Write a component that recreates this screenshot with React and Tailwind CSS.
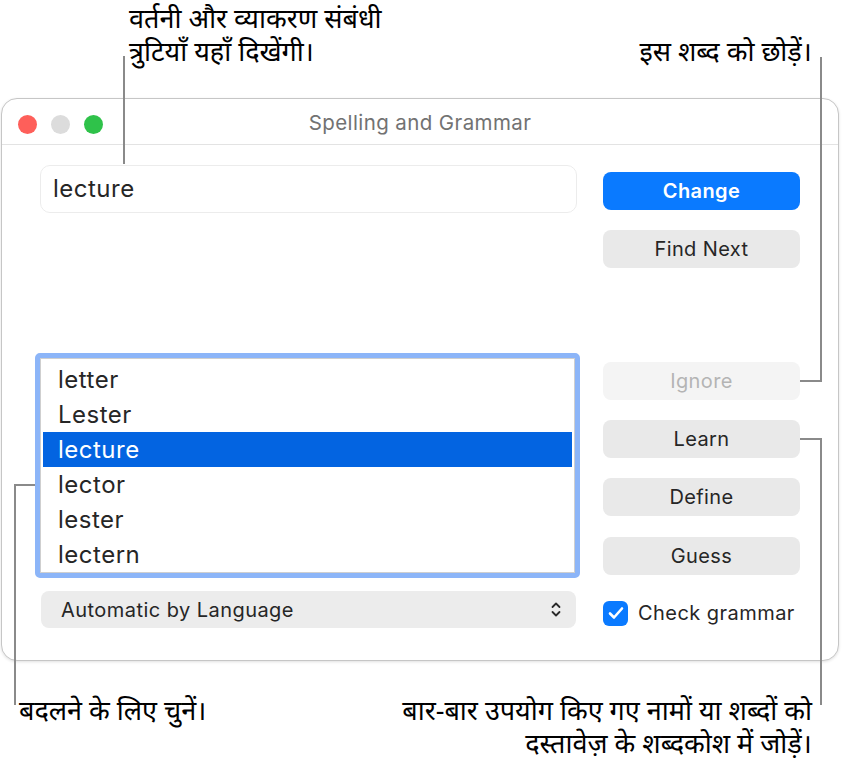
import React from 'react';

const ui = { fontFamily: 'Inter, "Liberation Sans", sans-serif' };
const hi = { fontFamily: '"Noto Sans", "Noto Sans Devanagari", "Lohit Devanagari", sans-serif' };

const suggestions = ['letter', 'Lester', 'lecture', 'lector', 'lester', 'lectern'];

const Button = ({ children, className = '' }) => (
    <div className={`h-[38px] rounded-[8px] flex items-center justify-center text-[20px] tracking-[0.4px] ${className}`}>
        {children}
    </div>
);

const Callouts = () => (
    <svg className="absolute inset-0 pointer-events-none" width="843" height="766">
        <g stroke="#8a8a8a" strokeWidth="2" fill="none">
            <path d="M124 56 V164" />
            <path d="M821 57 V381 H800" />
            <path d="M800 439 H821 V705" />
            <path d="M35 485 H15 V705" />
        </g>
    </svg>
);

export default function App() {
    return (
        <div className="relative w-[843px] h-[766px] bg-white overflow-hidden" style={ui}>
            {/* annotation text */}
            <div className="absolute left-[129px] top-[1px] text-[27px] leading-[33px] text-black" style={hi}>
                वर्तनी और व्याकरण संबंधी<br />त्रुटियाँ यहाँ दिखेंगी।
            </div>
            <div className="absolute right-[31px] top-[34px] text-[27px] leading-[33px] text-black" style={hi}>
                इस शब्द को छोड़ें।
            </div>

            <div className="pt-[98px] pl-[1px]">
                <div className="w-[838px] h-[563px] rounded-[16px] border border-[#c6c6c6] bg-white shadow-[0_1px_3px_rgba(0,0,0,0.12)] overflow-hidden">
                    {/* title bar */}
                    <div className="relative h-[46px] border-b border-[#e3e3e3] flex items-center justify-center">
                        <div className="absolute left-[16px] top-[16px] flex gap-[14px]">
                            <span className="w-[19px] h-[19px] rounded-full bg-[#fe5f5a]" />
                            <span className="w-[19px] h-[19px] rounded-full bg-[#dcdcdc]" />
                            <span className="w-[19px] h-[19px] rounded-full bg-[#2fc24a]" />
                        </div>
                        <span className="text-[20.5px] tracking-[0.4px] text-[#727272] mt-[3px]">Spelling and Grammar</span>
                    </div>

                    <div className="flex pl-[38px] gap-[26px]">
                        {/* left column */}
                        <div className="w-[537px] flex flex-col">
                            <div className="mt-[20px] h-[48px] rounded-[10px] border border-[#ececec] flex items-center pl-[12px] text-[24px] tracking-[0.5px] text-[#262626]">
                                lecture
                            </div>
                            <div className="mt-[140px] -ml-[5px] w-[545px] h-[225px] rounded-[5px] border-[5px] border-[#8cb5f8]">
                                <div className="h-full border border-[#cfcfcf] bg-white pt-[3px] px-[2px]">
                                    {suggestions.map((w, i) => (
                                        <div
                                            key={w}
                                            className={`h-[35px] flex items-center pl-[15px] text-[24px] tracking-[0.5px] ${i === 2 ? 'bg-[#0364e1] text-white' : 'text-[#262626]'}`}
                                        >
                                            {w}
                                        </div>
                                    ))}
                                </div>
                            </div>
                            <div className="mt-[13px] ml-[1px] w-[535px] h-[37px] rounded-[8px] bg-[#ececec] flex items-center justify-between pl-[20px] pr-[15px] text-[20px] tracking-[0.45px] text-[#262626]">
                                <span>Automatic by Language</span>
                                <svg width="10" height="17" viewBox="0 0 10 17">
                                    <path d="M1.5 6 L5 2.5 L8.5 6 M1.5 11 L5 14.5 L8.5 11" stroke="#2a2a2a" strokeWidth="1.8" fill="none" strokeLinecap="round" strokeLinejoin="round" />
                                </svg>
                            </div>
                        </div>

                        {/* right column */}
                        <div className="w-[197px] flex flex-col">
                            <Button className="mt-[27px] bg-[#0a7aff] text-white font-semibold">Change</Button>
                            <Button className="mt-[20px] bg-[#e9e9e9] text-[#262626]">Find Next</Button>
                            <Button className="mt-[94px] bg-[#f4f4f4] text-[#b4b4b4]">Ignore</Button>
                            <Button className="mt-[20px] bg-[#e9e9e9] text-[#262626]">Learn</Button>
                            <Button className="mt-[20px] bg-[#e9e9e9] text-[#262626]">Define</Button>
                            <Button className="mt-[21px] bg-[#e9e9e9] text-[#262626]">Guess</Button>
                            <div className="mt-[23px] flex items-center gap-[10px]">
                                <span className="w-[25px] h-[25px] rounded-[6px] bg-[#0a7aff] flex items-center justify-center">
                                    <svg width="16" height="14" viewBox="0 0 16 14">
                                        <path d="M2 7.5 L6 11.5 L14 2.5" stroke="white" strokeWidth="2.6" fill="none" strokeLinecap="round" strokeLinejoin="round" />
                                    </svg>
                                </span>
                                <span className="text-[20px] tracking-[0.45px] text-[#262626]">Check grammar</span>
                            </div>
                        </div>
                    </div>
                </div>
            </div>

            {/* bottom annotations */}
            <div className="absolute left-[19px] top-[693px] text-[27px] leading-[33px] text-black" style={hi}>
                बदलने के लिए चुनें।
            </div>
            <div className="absolute right-[31px] top-[693px] text-right text-[27px] leading-[33px] text-black" style={hi}>
                बार-बार उपयोग किए गए नामों या शब्दों को<br />दस्तावेज़ के शब्दकोश में जोड़ें।
            </div>

            <Callouts />
        </div>
    );
}
